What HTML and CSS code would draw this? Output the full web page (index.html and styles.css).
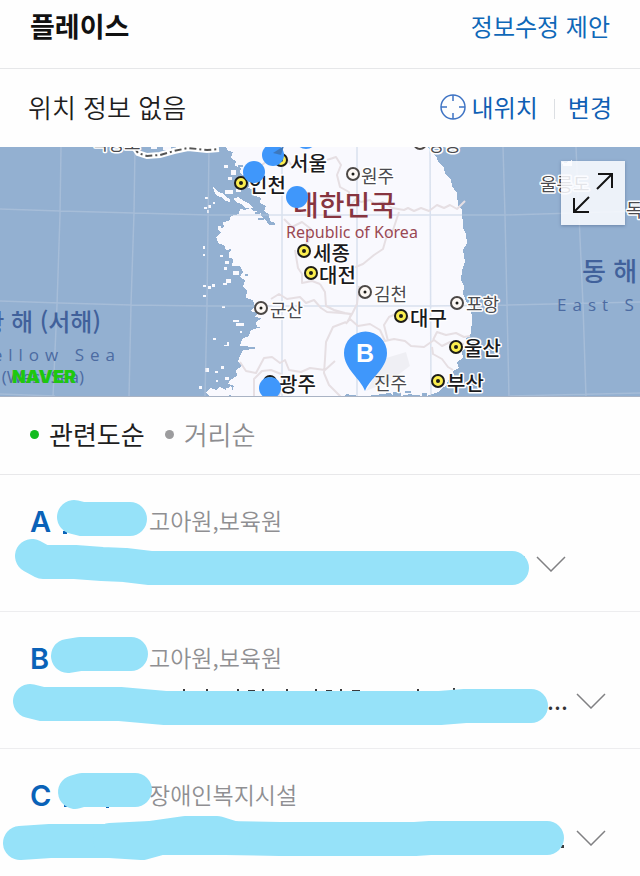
FILE: index.html
```
<!DOCTYPE html>
<html lang="ko">

<head>
    <meta charset="UTF-8">
    <meta name="viewport" content="width=device-width, initial-scale=1.0">
    <title>플레이스</title>
    <link rel="stylesheet" href="styles.css">
</head>

<body>

    <header class="place-header">
        <h1>플레이스</h1>
        <a href="#suggest">정보수정 제안</a>
    </header>

    <section class="location-bar">
        <p>위치 정보 없음</p>
        <div class="location-actions">
            <button type="button" class="my-location">
                <svg width="26" height="26" viewBox="0 0 26 26" aria-hidden="true">
                    <circle cx="13" cy="13" r="12" />
                    <path d="M13 1v6M13 19v6M1 13h6M19 13h6" />
                </svg>
                내위치
            </button>
            <button type="button" class="change">변경</button>
        </div>
    </section>

    <section class="map">
        <svg class="map-canvas" viewBox="0 147 640 250" preserveAspectRatio="xMidYMid slice">
            <!-- land -->
            <path class="land" d="M226 147L228 151L233 152L231 158L236 161L235 166L241 168L240 173L245 176L244 181L250 183L248 188L255 190L253 195L261 198L260 203L266 206L264 211L269 214L270 221L275 223V225H269L266 220L262 217L260 212L254 211L250 208L245 210L240 209L239 214L231 216L229 221L223 222L224 227L218 229L221 233L216 237L219 244L224 245L226 250L231 249L229 256L233 260L232 266L240 266L243 272L240 277L245 280L243 287L247 291L246 298L253 300L255 307L250 311L258 313L254 317L262 318L256 322L257 327H262L251 330L249 336L242 339L240 346L255 347V349L243 350L240 356L238 361L242 366L236 370L237 376L230 380L228 384L234 386L230 397H343L347 394L360 397L390 393L396 397L410 394L424 397L438 392L441 389L446 386L449 379L454 376L453 371L459 368L457 362L463 358L462 351L468 347L466 339L471 333L472 320L471 308L467 303L463 294L464 286L461 280L462 270L465 262L463 250L467 243L466 234L463 228L462 210L458 206L457 193L452 186L451 179L445 174L444 168L438 162L437 157L432 153L428 147Z" />
            <path class="land" d="M151 147h6v2h-6zM163 147h8v3h-8zM176 147h6v4h-6zM197 147h14v2h-14zM213 187l3 2 2 3 4 1 3 3 5 3v3l-5-1-4-4-4-1-3-5zM205 197h3v2h-3zM204 207h3v2h-3zM208 205h3v3h-3zM207 210h2v3h-2zM213 202h2v2h-2zM225 190h8v4h-8zM236 189h5v3h-5zM233 199l5-2 6 4 6 3 3 4h-8l-3-4-5-1zM228 177h4v3h-4zM224 165h4v3h-4zM231 170h5v5h-5zM218 226h3v3h-3zM203 246h2v3h-2zM203 254h2v2h-2zM220 255h3v2h-3zM225 261h4v3h-4zM229 252h3v6h-3zM224 267h3v3h-3zM233 271h6v4h-6zM203 285h3v2h-3zM208 286h3v3h-3zM212 284h3v3h-3zM203 295h3v2h-3zM223 283h4v2h-4zM226 279h5v4h-5zM222 306h3v2h-3zM233 320h6v2h-6zM236 323h8v3h-8zM240 331h2v2h-2zM213 338h3v2h-3zM224 345h3v-3h2v4h-5zM205 368h4v4h-4zM215 371h3v2h-3zM221 366h3v3h-3zM216 380h2v2h-2zM225 377h4v3h-4zM226 388h5v4h-5zM199 386h3v3h-3zM206 392l5-4 5 2 4-3 6 3 5-4 3 7-8 4h-16zM562 162l4 1 3-2 3-1v6h-9z" />
            <path class="bay" d="M255 212h5v2h-5zM258 218h6v2h-6zM242 178h4v2h-4zM238 165h5v2h-5zM245 274h3v2h-3zM246 319h8v2h-8zM393 392h8v5h-8zM405 391h6v2h-6zM411 395h9v2h-9zM422 393h5v4h-5zM432 395h10v2h-10zM348 395h8v2h-8z" />

            <!-- graticule -->
            <path class="grid-line" d="M61 147L60 215L57 305L53 397M135 147L134 213L131 305L129 397M209 147L207 305L205 397M282 147V397M357 147V397M430 147L431 397M503 147L505 215L507 305L509 397M576 147L579 215L583 305L586 397M0 209L60 211L134 213L209 215H505L640 211M0 301L60 303L131 305L207 306H430L507 305L640 302M0 394L55 396M510 396L640 393" />

            <!-- province borders -->
            <path class="province" d="M262 165l6-5 9 3 3-8 8 4M288 160l5 8 8-3 8 5M327 160l9-3 5 8-4 10 3 12 9 5v15M349 207l7-8 5 3 9-2 5 5 8-3 9 6 12 2 4-2 6 3 7-3 8 3 8-6 7 3 6-3 7 4 8-8M284 219l8 8 10-5 9 7-3 13-10 8M295 250l3 18 4 6v9l10-2 8 3M320 284l5 8 1 14 8 4 11 3 6 1-3 8M399 212l-6 18-6 5-4 14-9 6-11 9-10 4M346 324l6-10 5-10 2-18M271 299l8-5 8 5 13-2 6 6 8-3 7 8 6 4 14 1 9 1M346 322l-13 5-7 15-1 17M240 362l6 9 10 2 8-15 8-1 8 6 5-3 4 10 12 2 9-4 15 2 10-9M325 359l-1 14 5 12 12 12M350 319l8 7 12-2 10 6 5 11 9-2 11 2 6 5 13 1 10-7 8 6 8-4 14 2M388 341l-4-16 5-8 9-4 8 2 7 8M432 347l1 7 9 5 6 8 5 3M254 397v-18l8-8 9-1 10 4 2 12-5 11M433 340l4-8 9 3 10-2 8 4 6-1" />

            <!-- northern limit line -->
            <path class="limit-halo" d="M134 147l4 6 9 3 13-1 14-4 14-3 19 2 12-1" />
            <path class="limit" d="M134 147l4 6 9 3 13-1 14-4 14-3 19 2 12-1" />

            <!-- sea names -->
            <text class="sea-name" x="101" y="331" text-anchor="end">황 해 (서해)</text>
            <text class="sea-latin" x="121" y="361" text-anchor="end">Yellow Sea</text>
            <text class="sea-alt" x="84" y="383" text-anchor="end">(West Sea)</text>
            <text class="sea-name sea-east" x="582" y="281">동 해</text>
            <text class="sea-latin" x="557" y="311">East Sea</text>

            <text class="country" x="293" y="216">대한민국</text>
            <text class="country-latin" x="286" y="238">Republic of Korea</text>

            <!-- towns -->
            <g class="town">
                <text x="91" y="150">백령도</text>
                <text x="428" y="151">강릉</text>
                <text x="540" y="191">울릉도</text>
                <text x="626" y="217">독도</text>
                <text x="361" y="183">원주</text>
                <text x="374" y="301">김천</text>
                <text x="270" y="317">군산</text>
                <text x="466" y="311">포항</text>
                <text x="374" y="390">진주</text>
            </g>
            <g class="town-mark">
                <circle cx="420" cy="143" r="6" />
                <circle cx="353" cy="174" r="6" />
                <circle cx="365" cy="292" r="6" />
                <circle cx="261" cy="308" r="6" />
                <circle cx="457" cy="303" r="6" />
            </g>

            <!-- metropolitan cities -->
            <g class="city">
                <text x="290" y="171">서울</text>
                <text x="249" y="193">인천</text>
                <text x="313" y="261">세종</text>
                <text x="319" y="283">대전</text>
                <text x="410" y="326">대구</text>
                <text x="464" y="356">울산</text>
                <text x="447" y="391">부산</text>
                <text x="279" y="392">광주</text>
            </g>
            <g class="city-mark">
                <circle cx="281" cy="160" r="6" />
                <circle cx="241" cy="183" r="6" />
                <circle cx="304" cy="251" r="6" />
                <circle cx="311" cy="273" r="6" />
                <circle cx="401" cy="316" r="6" />
                <circle cx="456" cy="347" r="6" />
                <circle cx="438" cy="381" r="6" />
                <circle cx="270" cy="382" r="6" />
            </g>
            <g class="mark-core">
                <circle cx="281" cy="160" r="2" />
                <circle cx="241" cy="183" r="2" />
                <circle cx="304" cy="251" r="2" />
                <circle cx="311" cy="273" r="2" />
                <circle cx="401" cy="316" r="2" />
                <circle cx="456" cy="347" r="2" />
                <circle cx="438" cy="381" r="2" />
                <circle cx="353" cy="174" r="1.5" />
                <circle cx="365" cy="292" r="1.5" />
                <circle cx="261" cy="308" r="1.5" />
                <circle cx="457" cy="303" r="1.5" />
            </g>

            <!-- search results -->
            <g class="pin">
                <circle cx="306" cy="138" r="11" />
                <circle cx="273" cy="155" r="11" />
                <circle cx="254" cy="172" r="11" />
                <circle cx="297" cy="197" r="11" />
                <circle cx="270" cy="388" r="11" />
            </g>
            <path class="pin-fold" d="M273 153l11-7-3 9z" />
            <path class="pin-shadow" d="M366 391L386 358L406 352L410 366L390 381Z" />
            <path class="pin" d="M365 391C361 379 344 369 344 353A21.500 21.500 0 0 1 387 353C387 369 369 379 365 391Z" />
            <text class="pin-letter" x="365" y="362" text-anchor="middle">B</text>
            <text class="map-logo" x="12" y="383">NAVER</text>
            <path class="map-edge" d="M0 396.500H640" />
        </svg>
        <button type="button" class="map-expand" aria-label="지도 크게 보기">
            <svg width="64" height="64" viewBox="0 0 64 64" aria-hidden="true">
                <path d="M36 28L51 13M37 13H51V27M28 36L13 51M13 37V51H28" />
            </svg>
        </button>
    </section>

    <form class="sort">
        <label class="sort-option">
            <input type="radio" name="sort" checked>
            <span>관련도순</span>
        </label>
        <label class="sort-option">
            <input type="radio" name="sort">
            <span>거리순</span>
        </label>
    </form>

    <ul class="results">
        <li class="result">
            <h2 class="result-title">
                <span class="result-letter">A</span>
                <svg class="result-name" viewBox="0 0 98 36" aria-hidden="true">
                    <path class="peek-blue" d="M13 28h4v3h-4z" />
                    <path class="marker" d="M24 14L32 16H80" />
                </svg>
                <span class="result-type">고아원,보육원</span>
            </h2>
            <div class="result-address">
                <svg class="address address-short" viewBox="0 0 530 50" aria-hidden="true">
                    <path class="peek" d="M523 17l2 1v3z" />
                    <path class="marker" d="M32 17L43 23H75L102 25L125 26L150 29H512" />
                </svg>
                <button type="button" class="toggle" aria-label="주소 펼치기">
                    <svg width="30" height="16" viewBox="0 0 30 16" aria-hidden="true"><path d="M1 1l14 14L29 1" /></svg>
                </button>
            </div>
        </li>
        <li class="result">
            <h2 class="result-title">
                <span class="result-letter">B</span>
                <svg class="result-name" viewBox="0 0 98 36" aria-hidden="true">
                    <path class="marker" d="M18 16L30 14H81" />
                </svg>
                <span class="result-type">고아원,보육원</span>
            </h2>
            <div class="result-address">
                <svg class="address" viewBox="0 0 570 50" aria-hidden="true">
                    <path class="peek" d="M183 13h2v3h-2zM206 13h2v3h-2zM237 13h2v3h-2zM248 14h7v2h-7zM262 13h2v3h-2zM286 13h2v3h-2zM315 13h2v3h-2zM326 14h6v2h-6zM340 13h2v3h-2zM352 14h8v2h-8zM417 13h2v3h-2zM453 12h2v3h-2z" />
                    <path class="marker" d="M30 25L42 28H120L165 32H440L465 30H531" />
                    <text class="dots" x="547" y="34">...</text>
                </svg>
                <button type="button" class="toggle" aria-label="주소 펼치기">
                    <svg width="30" height="16" viewBox="0 0 30 16" aria-hidden="true"><path d="M1 1l14 14L29 1" /></svg>
                </button>
            </div>
        </li>
        <li class="result">
            <h2 class="result-title">
                <span class="result-letter">C</span>
                <svg class="result-name" viewBox="0 0 98 36" aria-hidden="true">
                    <path class="peek-blue" d="M14 27h3v3h-3zM56 28h3v3h-3z" />
                    <path class="marker" d="M25 15L32 13H85" />
                </svg>
                <span class="result-type">장애인복지시설</span>
            </h2>
            <div class="result-address">
                <svg class="address" viewBox="0 0 570 50" aria-hidden="true">
                    <path class="peek" d="M561 32h3v3h-3z" />
                    <path class="marker" d="M20 30L50 28H110L142 30L160 25H225L280 26H415L430 25H547" />
                    <path class="marker" d="M110 27L150 25L185 20H217L233 25" />
                </svg>
                <button type="button" class="toggle" aria-label="주소 펼치기">
                    <svg width="30" height="16" viewBox="0 0 30 16" aria-hidden="true"><path d="M1 1l14 14L29 1" /></svg>
                </button>
            </div>
        </li>
    </ul>

</body>

</html>
```
FILE: styles.css
```
/* Basic reset and styling */
* {
    margin: 0;
    padding: 0;
    box-sizing: border-box;
}

body {
    font-family: "Noto Sans CJK KR", "Noto Sans", sans-serif;
    background-color: #fefefe;
    color: #1e1e1e;
}

button {
    border: none;
    background: none;
    font-family: inherit;
    cursor: pointer;
}

svg {
    display: block;
}

/* Header */
.place-header {
    display: flex;
    justify-content: space-between;
    align-items: center;
    padding: 6px 30px 22px;
    border-bottom: 1px solid #e6e7e9;
}

.place-header h1 {
    font-size: 27px;
    line-height: 40px;
    font-weight: 700;
    color: #111;
}

.place-header a {
    font-size: 24px;
    line-height: 40px;
    color: #0f68b8;
    text-decoration: none;
}

/* Location bar */
.location-bar {
    display: flex;
    justify-content: space-between;
    align-items: center;
    padding: 18px 28px 20px;
}

.location-bar p {
    font-size: 26px;
    line-height: 40px;
    font-weight: 350;
}

.location-actions {
    display: flex;
    align-items: center;
}

.location-actions button {
    font-size: 24px;
    line-height: 40px;
    color: #0f5fb4;
}

.my-location {
    display: flex;
    align-items: center;
    gap: 6px;
    padding-right: 16px;
}

.my-location svg {
    fill: none;
    stroke: #3f74c4;
    stroke-width: 1.5;
}

.change::before {
    content: "";
    display: inline-block;
    width: 1px;
    height: 20px;
    margin-right: 13px;
    vertical-align: -2px;
    background-color: #dcdfe3;
}

/* Map */
.map {
    position: relative;
    height: 250px;
    overflow: hidden;
    background-color: #93b0d1;
}

.map-canvas {
    width: 100%;
    height: 100%;
}

.land {
    fill: #f9f9fe;
    shape-rendering: crispEdges;
}

.bay {
    fill: #93b0d1;
    shape-rendering: crispEdges;
}

.grid-line {
    fill: none;
    stroke: #b9c9e0;
    stroke-width: 1.5;
    opacity: 0.5;
}

.province {
    fill: none;
    stroke: #e6dfe3;
    stroke-width: 2;
    stroke-linejoin: round;
}

.limit-halo {
    fill: none;
    stroke: #fff;
    stroke-width: 6;
}

.limit {
    fill: none;
    stroke: #555;
    stroke-width: 2;
    stroke-dasharray: 7 3 2 3;
}

.sea-name {
    font-size: 24px;
    font-weight: 500;
    fill: #41619b;
}

.sea-east {
    font-size: 26px;
}

/* tracked out like a printed sea name */
.sea-latin {
    font-family: "Open Sans", sans-serif;
    font-size: 17px;
    letter-spacing: 6px;
    fill: #4c6ba2;
}

.sea-alt {
    font-family: "Open Sans", sans-serif;
    font-size: 17px;
    fill: #4c6ba2;
}

.country {
    font-size: 28px;
    font-weight: 500;
    fill: #873540;
}

.country-latin {
    font-family: "Noto Sans", sans-serif;
    font-size: 16px;
    fill: #9a4853;
}

.town,
.city {
    stroke: #fff;
    stroke-width: 3;
    stroke-linejoin: round;
    paint-order: stroke;
}

.town {
    font-size: 18px;
    fill: #4a4a4e;
}

.city {
    font-size: 20px;
    font-weight: 500;
    fill: #1a1a1c;
}

.town-mark {
    fill: #fdf8f4;
    stroke: #4c4846;
    stroke-width: 2;
}

.city-mark {
    fill: #fbee4f;
    stroke: #1c1c18;
    stroke-width: 2;
}

.mark-core {
    fill: #1c1c18;
}

.pin {
    fill: #3f97fb;
}

.pin-fold {
    fill: #3d78bd;
}

.pin-shadow {
    fill: #000;
    opacity: 0.04;
}

.pin-letter {
    font-family: "Liberation Sans", sans-serif;
    font-size: 25px;
    font-weight: 700;
    fill: #fff;
}

.map-logo {
    font-family: Inter, sans-serif;
    font-size: 18px;
    font-weight: 900;
    fill: #1ec80e;
}

.map-edge {
    stroke: #a9b3c4;
}

.map-expand {
    position: absolute;
    top: 14px;
    right: 15px;
    background-color: rgba(250, 252, 255, 0.87);
    box-shadow: 0 1px 3px rgba(50, 70, 110, 0.4);
}

.map-expand svg {
    fill: none;
    stroke: #151515;
    stroke-width: 2;
}

/* Sort options */
.sort {
    display: flex;
    gap: 20px;
    padding: 17px 30px 20px;
    border-bottom: 1px solid #e8e8ea;
}

.sort-option {
    display: flex;
    align-items: center;
    gap: 10px;
    font-size: 26px;
    line-height: 40px;
    font-weight: 350;
    color: #8d8d90;
    cursor: pointer;
}

.sort-option input {
    appearance: none;
    width: 9px;
    height: 9px;
    border-radius: 50%;
    background-color: #9c9c9e;
}

.sort-option input:checked {
    background-color: #12bc1e;
}

.sort-option input:checked + span {
    font-weight: 400;
    color: #1e1e1e;
}

/* Results */
.results {
    list-style: none;
}

.result {
    padding: 28px 0 22px;
    border-bottom: 1px solid #ededef;
}

.result:last-child {
    padding-bottom: 12px;
    border-bottom: none;
}

.result-title {
    display: flex;
    align-items: center;
    height: 36px;
    padding-left: 30px;
    font-weight: 400;
}

.result-letter {
    width: 20px;
    font-family: Inter, sans-serif;
    font-size: 29px;
    font-weight: 600;
    color: #0a62b8;
}

.result-name {
    position: relative;
    width: 98px;
    height: 36px;
    overflow: visible;
}

.result-type {
    padding: 0 0 3px 1px;
    font-size: 23px;
    font-weight: 350;
    white-space: nowrap;
    color: #8f8f92;
}

.result-address {
    display: flex;
    align-items: center;
    gap: 6px;
}

.address {
    width: 570px;
    height: 50px;
    overflow: visible;
}

.address-short {
    width: 530px;
}

.marker {
    fill: none;
    stroke: #96e2f9;
    stroke-width: 34;
    stroke-linecap: round;
    stroke-linejoin: round;
}

.peek {
    fill: #3a3a3c;
}

.peek-blue {
    fill: #0a62b8;
}

.dots {
    font-size: 25px;
    fill: #333;
}

.toggle svg {
    fill: none;
    stroke: #808083;
    stroke-width: 1.5;
}
```
